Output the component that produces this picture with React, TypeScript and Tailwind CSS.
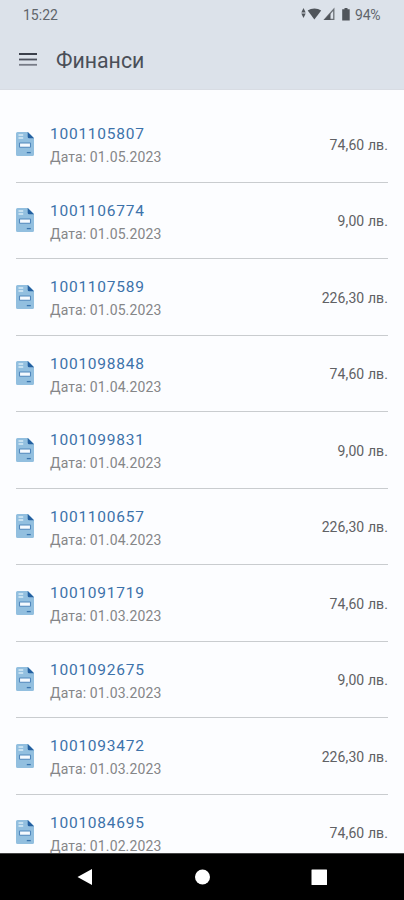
const invoices = [
  { id: '1001105807', date: '01.05.2023', amount: '74,60' },
  { id: '1001106774', date: '01.05.2023', amount: '9,00' },
  { id: '1001107589', date: '01.05.2023', amount: '226,30' },
  { id: '1001098848', date: '01.04.2023', amount: '74,60' },
  { id: '1001099831', date: '01.04.2023', amount: '9,00' },
  { id: '1001100657', date: '01.04.2023', amount: '226,30' },
  { id: '1001091719', date: '01.03.2023', amount: '74,60' },
  { id: '1001092675', date: '01.03.2023', amount: '9,00' },
  { id: '1001093472', date: '01.03.2023', amount: '226,30' },
  { id: '1001084695', date: '01.02.2023', amount: '74,60' },
];

function InvoiceIcon() {
  return (
    <svg width="18" height="24" viewBox="0 0 18 24" className="shrink-0">
      <path d="M1.5 0H12l6 6v16.5a1.5 1.5 0 0 1-1.5 1.5h-15A1.5 1.5 0 0 1 0 22.5v-21A1.5 1.5 0 0 1 1.5 0Z" fill="#92bfdf" />
      <path d="M11.7 0 18 6.3h-4.8a1.5 1.5 0 0 1-1.5-1.5Z" fill="#2460a0" />
      <path d="M2.5 3h4.7M2.5 6h4.7" stroke="#d9edf8" strokeWidth="1.7" />
      <rect x="3.5" y="11" width="11" height="4.2" rx=".5" fill="#f5faff" stroke="#5087bc" strokeWidth="1.1" />
      <path d="M10.8 20.6h4" stroke="#3975ae" strokeWidth="1.3" />
    </svg>
  );
}

function StatusBar() {
  return (
    <div className="flex h-[30px] items-center justify-between pl-[23px] pr-[23px] text-[#60656b]">
      <span className="text-[14px] leading-[30px]">15:22</span>
      <div className="flex items-center">
        <svg width="52" height="16" viewBox="0 0 52 16" fill="#50555b" className="mb-[2px]">
          <path d="M2.5 2 4.7 6.5H.3ZM2.5 12 .3 7.5h4.4Z" />
          <path d="M6.7 4.6C10.5 1.8 16.3 1.8 20.2 4.6L13.4 13.5Z" />
          <path d="M23.8 13.4h9V3.2Z" fill="none" stroke="#6c7177" strokeWidth="1.3" />
          <path d="M23 14 29.5 7v7Z" />
          <path d="M43.5 2h3v1.3h2.2V14.5h-7.5V3.3h2.3Z" />
        </svg>
        <span className="ml-[2px] w-[26px] whitespace-nowrap text-[14px] leading-[30px] tracking-[-0.2px]">94%</span>
      </div>
    </div>
  );
}

export default function App() {
  return (
    <div className="flex h-[900px] w-[404px] flex-col overflow-hidden bg-[#fcfdff] font-['Roboto','Noto_Sans',sans-serif]">
      <header className="h-[90px] shrink-0 border-b border-[#d8dce3] bg-[#dce2ea]">
        <StatusBar />
        <div className="flex h-[60px] items-center pl-[19px]">
          <svg width="18" height="14" viewBox="0 0 18 14" strokeWidth="1.8">
            <path d="M0 1h18" stroke="#292e39" />
            <path d="M0 6.5h18" stroke="#4d525d" />
            <path d="M0 11.8h18" stroke="#777c87" />
          </svg>
          <h1 className="ml-[19px] pt-[2px] text-[21.3px] text-[#4a4f58]">Финанси</h1>
        </div>
      </header>
      <main className="min-h-0 flex-1 overflow-hidden px-4 pt-4">
        {invoices.map((invoice) => (
          <div key={invoice.id} className="flex h-[76.5px] items-center border-b-[1.5px] border-[#c9cccf]">
            <InvoiceIcon />
            <div className="ml-4 flex-1 pt-[3.5px]">
              <div className="text-[15.5px] leading-6 tracking-[0.75px] text-[#3c72aa]">{invoice.id}</div>
              <div className="text-[14px] leading-[23px] tracking-[0.12px] text-[#858688]">Дата: {invoice.date}</div>
            </div>
            <div className="pt-[3px] text-[14px] tracking-[0.1px] text-[#606164]">{invoice.amount} лв.</div>
          </div>
        ))}
      </main>
      <nav className="flex h-[47px] shrink-0 items-center border-t border-[#444] bg-black">
        <svg width="404" height="46" viewBox="0 0 404 46" fill="white">
          <path d="M92 15v16L77.5 23Z" />
          <circle cx="202.5" cy="23" r="7.5" />
          <rect x="311.5" y="15.5" width="15.5" height="15.5" rx=".5" />
        </svg>
      </nav>
    </div>
  );
}
